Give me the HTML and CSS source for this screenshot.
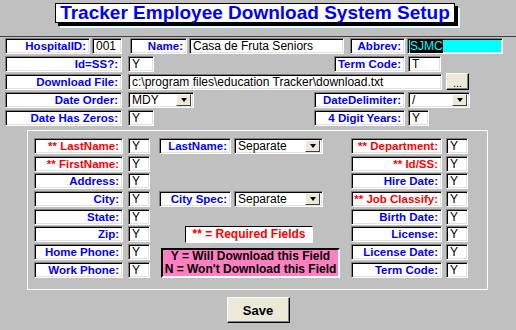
FILE: index.html
```html
<!DOCTYPE html>
<html lang="en">
<head>
    <meta charset="UTF-8">
    <title>Tracker Employee Download System Setup</title>
    <link rel="stylesheet" href="styles.css">
</head>
<body>
<div class="form">
    <header class="top">
        <h1 class="title">Tracker Employee Download System Setup</h1>
    </header>

    <section class="setup">
        <div class="row">
            <label class="lbl hosp">HospitalID:</label>
            <div class="box hosp-val">001</div>
            <label class="lbl name">Name:</label>
            <div class="box name-val">Casa de Fruta Seniors</div>
            <label class="lbl abbrev">Abbrev:</label>
            <div class="box abbrev-val"><span class="sel">SJMC</span></div>
        </div>
        <div class="row">
            <label class="lbl wide">Id=SS?:</label>
            <div class="box short">Y</div>
            <label class="lbl term">Term Code:</label>
            <div class="box term-val">T</div>
        </div>
        <div class="row">
            <label class="lbl wide">Download File:</label>
            <div class="box file-val">c:\program files\education Tracker\download.txt</div>
            <button class="btn browse">...</button>
        </div>
        <div class="row">
            <label class="lbl wide">Date Order:</label>
            <div class="box combo order-val"><span>MDY</span><i class="drop"></i></div>
            <label class="lbl delim">DateDelimiter:</label>
            <div class="box combo delim-val"><span>/</span><i class="drop"></i></div>
        </div>
        <div class="row">
            <label class="lbl wide">Date Has Zeros:</label>
            <div class="box short">Y</div>
            <label class="lbl years">4 Digit Years:</label>
            <div class="box years-val">Y</div>
        </div>
    </section>

    <section class="fields">
        <div class="grid">
            <!-- left column -->
            <label class="lbl left req r1">** LastName:</label>
            <div class="box yn c2 r1">Y</div>
            <label class="lbl left req r2">** FirstName:</label>
            <div class="box yn c2 r2">Y</div>
            <label class="lbl left r3">Address:</label>
            <div class="box yn c2 r3">Y</div>
            <label class="lbl left r4">City:</label>
            <div class="box yn c2 r4">Y</div>
            <label class="lbl left r5">State:</label>
            <div class="box yn c2 r5">Y</div>
            <label class="lbl left r6">Zip:</label>
            <div class="box yn c2 r6">Y</div>
            <label class="lbl left r7">Home Phone:</label>
            <div class="box yn c2 r7">Y</div>
            <label class="lbl left r8">Work Phone:</label>
            <div class="box yn c2 r8">Y</div>

            <!-- middle -->
            <div class="pair r1">
                <label class="lbl spec">LastName:</label>
                <div class="box combo spec-val"><span>Separate</span><i class="drop"></i></div>
            </div>
            <div class="pair r4">
                <label class="lbl spec">City Spec:</label>
                <div class="box combo spec-val"><span>Separate</span><i class="drop"></i></div>
            </div>
            <div class="note r6">** = Required Fields</div>
            <div class="legend">Y = Will Download this Field<br>N = Won't Download this Field</div>

            <!-- right column -->
            <label class="lbl right req r1">** Department:</label>
            <div class="box yn c5 r1">Y</div>
            <label class="lbl right req r2">** Id/SS:</label>
            <div class="box yn c5 r2">Y</div>
            <label class="lbl right r3">Hire Date:</label>
            <div class="box yn c5 r3">Y</div>
            <label class="lbl right req r4">** Job Classify:</label>
            <div class="box yn c5 r4">Y</div>
            <label class="lbl right r5">Birth Date:</label>
            <div class="box yn c5 r5">Y</div>
            <label class="lbl right r6">License:</label>
            <div class="box yn c5 r6">Y</div>
            <label class="lbl right r7">License Date:</label>
            <div class="box yn c5 r7">Y</div>
            <label class="lbl right r8">Term Code:</label>
            <div class="box yn c5 r8">Y</div>
        </div>
    </section>

    <footer class="actions">
        <button class="btn save">Save</button>
    </footer>
</div>
</body>
</html>
```

FILE: styles.css
```css
*{
    padding: 0;
    margin: 0;
    box-sizing: border-box;
}
body{
    background: #c0c0c0;
    font-family: "Liberation Sans", Arial, sans-serif;
    width: 516px;
    height: 330px;
    overflow: hidden;
}

/* title bar */
.top{
    height: 37px;
    border-bottom: 1px solid #404040;
    padding: 3px 0 0 55px;
}
.title{
    width: 400px;
    height: 20px;
    background: #fff;
    border: 1px solid #000;
    box-shadow: 3px 3px 0 #000, 5px 5px 0 #dcffff;
    color: #0000ff;
    font-size: 19px;
    line-height: 18px;
    text-align: center;
    font-weight: bold;
}

/* shared boxes */
.lbl, .box{
    display: block;
    height: 16px;
    background: #fff;
    border: 1px solid;
    border-color: #808080 #fff #fff #808080;
    box-shadow: inset 1px 1px 0 #000, inset -1px -1px 0 #e4e2da;
    font-size: 12px;
    line-height: 14px;
    white-space: nowrap;
    overflow: hidden;
}
.lbl{
    color: #0000ff;
    font-weight: bold;
    font-size: 11.5px;
    text-align: right;
    padding-right: 3px;
}
.lbl.req{
    color: #ff0000;
}
.box{
    color: #000;
    padding-left: 3px;
    font-family: "Liberation Sans Narrow", "Liberation Sans", Arial, sans-serif;
}
.sel{
    background: #000;
    color: #00ffff;
}
.combo{
    display: flex;
    align-items: center;
    justify-content: space-between;
    padding-right: 2px;
}
.drop{
    width: 15px;
    height: 12px;
    background: #ece9d8;
    border: 1px solid;
    border-color: #fff #404040 #404040 #fff;
    display: flex;
    align-items: center;
    justify-content: center;
}
.drop:after{
    content: "";
    border-left: 3px solid transparent;
    border-right: 3px solid transparent;
    border-top: 4px solid #000;
}
.btn{
    background: #ece9d8;
    border: 1px solid;
    border-color: #fff #000 #000 #fff;
    box-shadow: inset -1px -1px 0 #808080;
    font-family: "Liberation Sans", Arial, sans-serif;
    color: #000;
}

/* top setup rows */
.setup{
    padding: 1px 0 0 5px;
}
.row{
    display: flex;
    height: 16px;
    margin-bottom: 2px;
}
.hosp{ width: 85px; }
.hosp-val{ width: 30px; margin-left: 2px; }
.name{ width: 57px; margin-left: 8px; }
.name-val{ width: 155px; margin-left: 2px; }
.abbrev{ width: 55px; margin-left: 6px; }
.abbrev-val{ width: 96px; margin-left: 2px; background: #00ffff; padding-left: 2px; }
.wide{ width: 117px; }
.short{ width: 26px; margin-left: 6px; }
.term{ width: 71px; margin-left: 180px; }
.term-val{ width: 33px; margin-left: 3px; }
.file-val{ width: 314px; margin-left: 6px; }
.browse{ width: 23px; height: 17px; margin: -1px 0 0 4px; font-size: 11px; line-height: 10px; padding-top: 3px; }
.order-val{ width: 66px; margin-left: 6px; }
.delim{ width: 91px; margin-left: 120px; }
.delim-val{ width: 62px; margin-left: 3px; }
.years{ width: 91px; margin-left: 160px; }
.years-val{ width: 21px; margin-left: 3px; }

/* field group */
.fields{
    margin: 4px 0 0 27px;
    width: 461px;
    height: 160px;
    border: 1px solid #fff;
    padding: 7px 0 0 6px;
}
.grid{
    display: grid;
    grid-template-columns: 94px 22px 201px 95px 22px;
    grid-template-rows: repeat(8, 16px);
    row-gap: 1.7px;
}
.left{ grid-column: 1; width: 89px; }
.right{ grid-column: 4; width: 91px; }
.c2{ grid-column: 2; }
.c5{ grid-column: 5; }
.yn{ width: 22px; }
.r1{ grid-row: 1; }
.r2{ grid-row: 2; }
.r3{ grid-row: 3; }
.r4{ grid-row: 4; }
.r5{ grid-row: 5; }
.r6{ grid-row: 6; }
.r7{ grid-row: 7; }
.r8{ grid-row: 8; }

.pair{
    grid-column: 3;
    display: flex;
    padding-left: 9px;
}
.spec{ width: 72px; }
.spec-val{ width: 89px; margin-left: 3px; }

.note{
    grid-column: 3;
    width: 128px;
    height: 17px;
    margin-left: 35px;
    background: #fff;
    border: 1px solid;
    border-color: #000 #fff #fff #000;
    color: #ff0000;
    font-size: 12px;
    font-weight: bold;
    text-align: center;
    line-height: 15px;
}
.legend{
    grid-column: 3 / span 2;
    grid-row: 7 / span 2;
    align-self: end;
    width: 179px;
    height: 30px;
    margin-left: 11px;
    background: #ff80c0;
    border: 2px solid;
    border-color: #000 #fff #fff #000;
    color: #000;
    font-size: 12px;
    font-weight: bold;
    line-height: 13px;
    text-align: center;
}

/* save */
.actions{
    display: flex;
    justify-content: center;
    padding-top: 7px;
}
.save{
    width: 63px;
    height: 26px;
    font-size: 13px;
    font-weight: bold;
}
```
